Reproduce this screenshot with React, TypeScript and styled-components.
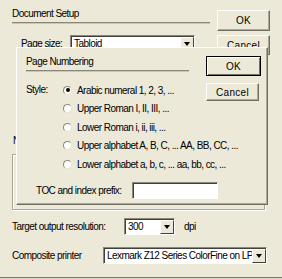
import styled, { createGlobalStyle } from "styled-components";

const Global = createGlobalStyle`
  body {
    margin: 0;
    background: #ece9d8;
  }
  * {
    box-sizing: border-box;
  }
`;

const Window = styled.div`
  position: relative;
  width: 282px;
  height: 279px;
  padding: 8px 12px 0 12px;
  background: #ece9d8;
  font-family: "Liberation Sans", Arial, sans-serif;
  font-size: 10px;
  letter-spacing: -0.55px;
  color: #000;
  overflow: hidden;
`;

const TopArea = styled.div`
  display: flex;
  justify-content: space-between;
`;

const MainCol = styled.div`
  width: 198px;
`;

const Heading = styled.div`
  height: 12px;
  line-height: 12px;
  white-space: nowrap;
`;

const HeadingLine = styled.div<{ $width: number }>`
  width: ${(p) => p.$width}px;
  height: 2px;
  margin-top: 2px;
  background: #8a8778;
  border-bottom: 1px solid #c9c6b6;
`;

const FieldRow = styled.div<{ $top: number }>`
  display: flex;
  align-items: center;
  margin-top: ${(p) => p.$top}px;
  white-space: nowrap;
`;

const Label = styled.span<{ $width: number; $indent?: number }>`
  width: ${(p) => p.$width}px;
  padding-left: ${(p) => p.$indent ?? 0}px;
  flex-shrink: 0;
`;

const Combo = styled.div<{ $width: number }>`
  display: flex;
  align-items: stretch;
  width: ${(p) => p.$width}px;
  height: 17px;
  background: #fff;
  border: 1px solid;
  border-color: #8a8778 #fff #fff #8a8778;
  box-shadow: inset 1px 1px 0 #404040;
`;

const ComboText = styled.span`
  flex: 1;
  padding: 1px 0 0 3px;
  line-height: 13px;
  overflow: hidden;
  white-space: nowrap;
`;

const DropButton = styled.span`
  display: flex;
  align-items: center;
  justify-content: center;
  width: 14px;
  margin: 1px 0 0 0;
  background: #ece9d8;
  border: 1px solid;
  border-color: #fff #404040 #404040 #fff;
  &::after {
    content: "";
    border-left: 3px solid transparent;
    border-right: 3px solid transparent;
    border-top: 4px solid #000;
  }
`;

const Unit = styled.span`
  margin-left: 9px;
`;

const ButtonCol = styled.div<{ $gap: number }>`
  display: flex;
  flex-direction: column;
  gap: ${(p) => p.$gap}px;
  padding-top: 2px;
`;

const Button = styled.button<{ $default?: boolean; $h: number }>`
  width: ${(p) => (p.$default ? 55 : 53)}px;
  height: ${(p) => p.$h}px;
  padding: 0;
  background: #ece9d8;
  font: inherit;
  letter-spacing: 0.3px;
  color: #000;
  border: 1px solid;
  border-color: ${(p) => (p.$default ? "#000" : "#fff #716f64 #716f64 #fff")};
  box-shadow: ${(p) =>
    p.$default
      ? "inset 1px 1px 0 #fff, inset -1px -1px 0 #716f64"
      : "inset -1px -1px 0 #aca899"};
`;

const Legend = styled.div`
  margin-top: 80px;
  height: 12px;
  line-height: 12px;
  padding-left: 1px;
`;

const GroupBox = styled.div`
  width: 253px;
  height: 56px;
  margin-top: 7px;
  border: 1px solid #aca899;
  box-shadow: inset 1px 1px 0 #fff, 1px 1px 0 #fff;
`;

const Footer = styled.div`
  height: 2px;
  margin: 13px -12px 0;
  background: #7d7b6c;
  border-bottom: 1px solid #d8d5c4;
`;

const SubDialog = styled.div`
  position: absolute;
  left: 16px;
  top: 47px;
  width: 252px;
  height: 158px;
  padding: 8px 6px 0 9px;
  background: #ece9d8;
  border-top: 1px solid #fff;
  border-left: 1px solid #fff;
  border-right: 1px solid #716f64;
  border-bottom: 1px solid #716f64;
  box-shadow: inset -1px -1px 0 #aca899;
  display: grid;
  grid-template-columns: minmax(0, 1fr) 55px;
  grid-template-rows: 18px auto;
  align-content: start;
`;

const SubTitle = styled.div`
  grid-column: 1;
  grid-row: 1;
`;

const SubButtons = styled(ButtonCol)`
  grid-column: 2;
  grid-row: 1 / span 2;
  padding-top: 0;
`;

const StyleArea = styled.div`
  grid-column: 1;
  grid-row: 2;
  display: flex;
  margin-top: 7px;
  white-space: nowrap;
`;

const StyleLabel = styled.span`
  width: 37px;
  flex-shrink: 0;
  line-height: 18px;
`;

const RadioList = styled.div`
  display: flex;
  flex-direction: column;
`;

const RadioItem = styled.label`
  display: flex;
  align-items: center;
  gap: 5px;
  height: 18.5px;
`;

const Radio = styled.span<{ $checked?: boolean }>`
  position: relative;
  flex-shrink: 0;
  width: 9px;
  height: 9px;
  border-radius: 50%;
  background: #fff;
  border: 1px solid;
  border-color: #8a8778 #e4e1d2 #e4e1d2 #8a8778;
  &::after {
    content: "";
    display: ${(p) => (p.$checked ? "block" : "none")};
    position: absolute;
    left: 1.5px;
    top: 1.5px;
    width: 4px;
    height: 4px;
    border-radius: 50%;
    background: #000;
  }
`;

const PrefixRow = styled.div`
  grid-column: 1 / span 2;
  display: flex;
  align-items: center;
  margin-top: 8px;
  padding-left: 10px;
  white-space: nowrap;
`;

const TextInput = styled.div`
  width: 86px;
  height: 17px;
  background: #fff;
  border: 1px solid;
  border-color: #8a8778 #fff #fff #8a8778;
  box-shadow: inset 1px 1px 0 #404040;
`;

const styles = [
  "Arabic numeral  1, 2, 3, ...",
  "Upper Roman  I, II, III, ...",
  "Lower Roman  i, ii, iii, ...",
  "Upper alphabet  A, B, C, ... AA, BB, CC, ...",
  "Lower alphabet  a, b, c, ... aa, bb, cc, ...",
];

export default function App() {
  return (
    <>
      <Global />
      <Window>
        <TopArea>
          <MainCol>
            <Heading>Document Setup</Heading>
            <HeadingLine $width={198} />
            <FieldRow $top={11}>
              <Label $width={58} $indent={9}>
                Page size:
              </Label>
              <Combo $width={125}>
                <ComboText>Tabloid</ComboText>
                <DropButton />
              </Combo>
            </FieldRow>
          </MainCol>
          <ButtonCol $gap={4}>
            <Button $h={21}>OK</Button>
            <Button $h={20}>Cancel</Button>
          </ButtonCol>
        </TopArea>

        <Legend>Numbering</Legend>
        <GroupBox />

        <FieldRow $top={8}>
          <Label $width={112}>Target output resolution:</Label>
          <Combo $width={51}>
            <ComboText>300</ComboText>
            <DropButton />
          </Combo>
          <Unit>dpi</Unit>
        </FieldRow>

        <FieldRow $top={12}>
          <Label $width={91}>Composite printer</Label>
          <Combo $width={164}>
            <ComboText>Lexmark Z12 Series ColorFine on LPT1</ComboText>
            <DropButton />
          </Combo>
        </FieldRow>

        <Footer />

        <SubDialog>
          <SubTitle>
            <Heading>Page Numbering</Heading>
            <HeadingLine $width={163} />
          </SubTitle>
          <SubButtons $gap={7}>
            <Button $default $h={20}>
              OK
            </Button>
            <Button $h={18}>Cancel</Button>
          </SubButtons>
          <StyleArea>
            <StyleLabel>Style:</StyleLabel>
            <RadioList>
              {styles.map((s, i) => (
                <RadioItem key={s}>
                  <Radio $checked={i === 0} />
                  <span>{s}</span>
                </RadioItem>
              ))}
            </RadioList>
          </StyleArea>
          <PrefixRow>
            <Label $width={96}>TOC and index prefix:</Label>
            <TextInput />
          </PrefixRow>
        </SubDialog>
      </Window>
    </>
  );
}
